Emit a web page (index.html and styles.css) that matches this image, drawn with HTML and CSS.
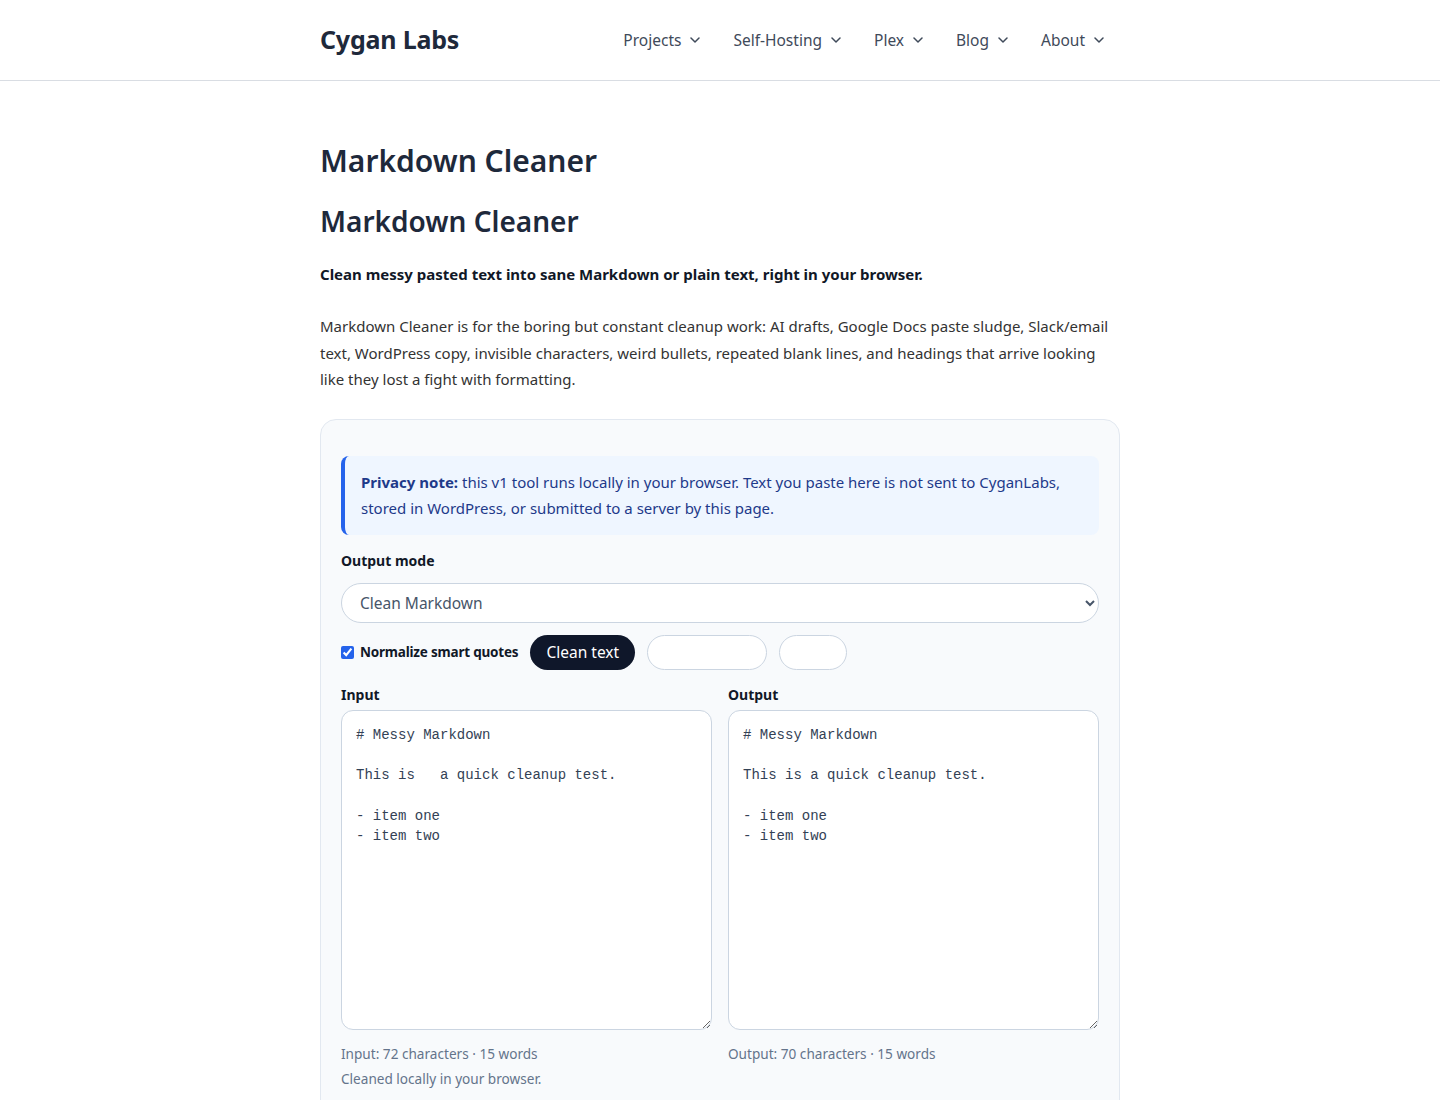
FILE: index.html
```html
<!DOCTYPE html>
<html lang="en">
<head>
  <meta charset="UTF-8" />
  <meta name="viewport" content="width=device-width, initial-scale=1" />
  <title>Markdown Cleaner – Cygan Labs</title>
  <link rel="stylesheet" href="styles.css">
</head>
<body>

  <header class="site-header">
    <div class="header-inner">
      <a class="logo" href="#">Cygan Labs</a>
      <nav class="main-nav">
        <a href="#">Projects <svg class="chev" viewBox="0 0 10 6"><path d="M1 1l4 4 4-4" /></svg></a>
        <a href="#">Self-Hosting <svg class="chev" viewBox="0 0 10 6"><path d="M1 1l4 4 4-4" /></svg></a>
        <a href="#">Plex <svg class="chev" viewBox="0 0 10 6"><path d="M1 1l4 4 4-4" /></svg></a>
        <a href="#">Blog <svg class="chev" viewBox="0 0 10 6"><path d="M1 1l4 4 4-4" /></svg></a>
        <a href="#">About <svg class="chev" viewBox="0 0 10 6"><path d="M1 1l4 4 4-4" /></svg></a>
      </nav>
    </div>
  </header>

  <main class="container">
    <h1 class="page-title">Markdown Cleaner</h1>
    <h2 class="tool-title">Markdown Cleaner</h2>
    <p class="lede">Clean messy pasted text into sane Markdown or plain text, right in your browser.</p>
    <p class="intro">Markdown Cleaner is for the boring but constant cleanup work: AI drafts, Google Docs paste sludge, Slack/email text, WordPress copy, invisible characters, weird bullets, repeated blank lines, and headings that arrive looking like they lost a fight with formatting.</p>

    <section class="tool-card">
      <p class="privacy-note"><strong>Privacy note:</strong> this v1 tool runs locally in your browser. Text you paste here is not sent to CyganLabs, stored in WordPress, or submitted to a server by this page.</p>

      <label class="field-label" for="mode">Output mode</label>
      <select id="mode" class="mode-select">
        <option>Clean Markdown</option>
        <option>Plain text</option>
      </select>

      <div class="actions">
        <label class="check">
          <input type="checkbox" checked />
          Normalize smart quotes
        </label>
        <button class="btn btn-dark">Clean text</button>
        <button class="btn btn-ghost btn-wide"></button>
        <button class="btn btn-ghost btn-small"></button>
      </div>

      <div class="panes">
        <div class="pane">
          <label class="field-label" for="input">Input</label>
          <textarea id="input" spellcheck="false"># Messy Markdown

This is   a quick cleanup test.

- item one
- item two</textarea>
          <p class="stats">Input: 72 characters · 15 words</p>
          <p class="stats">Cleaned locally in your browser.</p>
        </div>
        <div class="pane">
          <label class="field-label" for="output">Output</label>
          <textarea id="output" spellcheck="false"># Messy Markdown

This is a quick cleanup test.

- item one
- item two</textarea>
          <p class="stats">Output: 70 characters · 15 words</p>
        </div>
      </div>
    </section>
  </main>

</body>
</html>
```

FILE: styles.css
```css
* {
  margin: 0;
  padding: 0;
  box-sizing: border-box;
}

:root {
  --ink: #1e293b;
  --text: #334155;
  --muted: #64748b;
  --border: #e2e8f0;
  --field-border: #cbd5e1;
  --blue: #2563eb;
}

body {
  font-family: 'Noto Sans', sans-serif;
  background: #fff;
  color: var(--text);
}

.site-header {
  border-bottom: 1px solid #d9dde3;
  height: 81px;
}

.header-inner {
  width: 800px;
  margin: 0 auto;
  height: 80px;
  display: flex;
  align-items: center;
  justify-content: space-between;
}

.logo {
  font-size: 25px;
  font-weight: 700;
  color: var(--ink);
  text-decoration: none;
  letter-spacing: -0.2px;
  margin-top: -2px;
}

.main-nav {
  display: flex;
  gap: 33px;
  padding-right: 16px;
}

.main-nav a {
  display: flex;
  align-items: center;
  gap: 9px;
  color: #3f4a5a;
  text-decoration: none;
  font-size: 15.5px;
}

.chev {
  width: 10px;
  height: 6px;
  fill: none;
  stroke: #3f4a5a;
  stroke-width: 1.5;
  stroke-linecap: round;
  stroke-linejoin: round;
}

.container {
  width: 800px;
  margin: 0 auto;
  padding-top: 58px;
}

.page-title {
  font-size: 30px;
  font-weight: 600;
  color: var(--ink);
  line-height: 44px;
}

.tool-title {
  font-size: 28px;
  font-weight: 600;
  color: var(--ink);
  line-height: 40px;
  margin-top: 18px;
}

.lede {
  font-size: 15px;
  font-weight: 700;
  color: #111827;
  margin-top: 23px;
}

.intro {
  font-size: 15px;
  line-height: 26.5px;
  color: #333;
  margin-top: 29px;
}

.tool-card {
  margin-top: 26px;
  background: #f8fafc;
  border: 1px solid var(--border);
  border-radius: 16px;
  padding: 36px 20px 40px;
}

.privacy-note {
  background: #eff6ff;
  border-left: 4px solid var(--blue);
  border-radius: 8px;
  padding: 13px 20px 14px 16px;
  color: #1e3a8a;
  font-size: 15px;
  line-height: 26px;
}

.privacy-note strong {
  color: #1e3a8a;
}

.field-label {
  display: block;
  font-size: 14px;
  font-weight: 700;
  color: #111827;
}

.tool-card > .field-label {
  margin-top: 16px;
  margin-bottom: 13px;
}

.mode-select {
  width: 100%;
  height: 40px;
  border: 1px solid var(--field-border);
  border-radius: 20px;
  background: #fff;
  padding: 0 14px;
  font-family: inherit;
  font-size: 15.5px;
  color: #475569;
}

.actions {
  display: flex;
  align-items: center;
  gap: 12px;
  margin-top: 12px;
}

.check {
  display: flex;
  align-items: center;
  gap: 6px;
  font-size: 13.5px;
  letter-spacing: -0.2px;
  font-weight: 700;
  color: #111827;
}

.check input {
  width: 13px;
  height: 13px;
  accent-color: var(--blue);
}

.btn {
  height: 35px;
  border-radius: 18px;
  font-family: inherit;
  font-size: 15.5px;
}

.btn-dark {
  background: #0f172a;
  color: #fff;
  border: none;
  padding: 0 16px;
}

.btn-ghost {
  background: #fff;
  border: 1px solid var(--field-border);
}

.btn-wide {
  width: 120px;
}

.btn-small {
  width: 68px;
}

.panes {
  display: grid;
  grid-template-columns: 1fr 1fr;
  gap: 16px;
  margin-top: 15px;
}

.pane .field-label {
  margin-bottom: 6px;
}

.pane textarea {
  display: block;
  width: 100%;
  height: 320px;
  border: 1px solid var(--field-border);
  border-radius: 12px;
  background: #fff;
  padding: 14px;
  font-family: 'Liberation Mono', monospace;
  font-size: 14px;
  line-height: 20.3px;
  color: #334155;
  resize: vertical;
}

.stats {
  font-size: 13.6px;
  color: var(--muted);
  line-height: 25px;
}

.pane textarea + .stats {
  margin-top: 11px;
}
```
